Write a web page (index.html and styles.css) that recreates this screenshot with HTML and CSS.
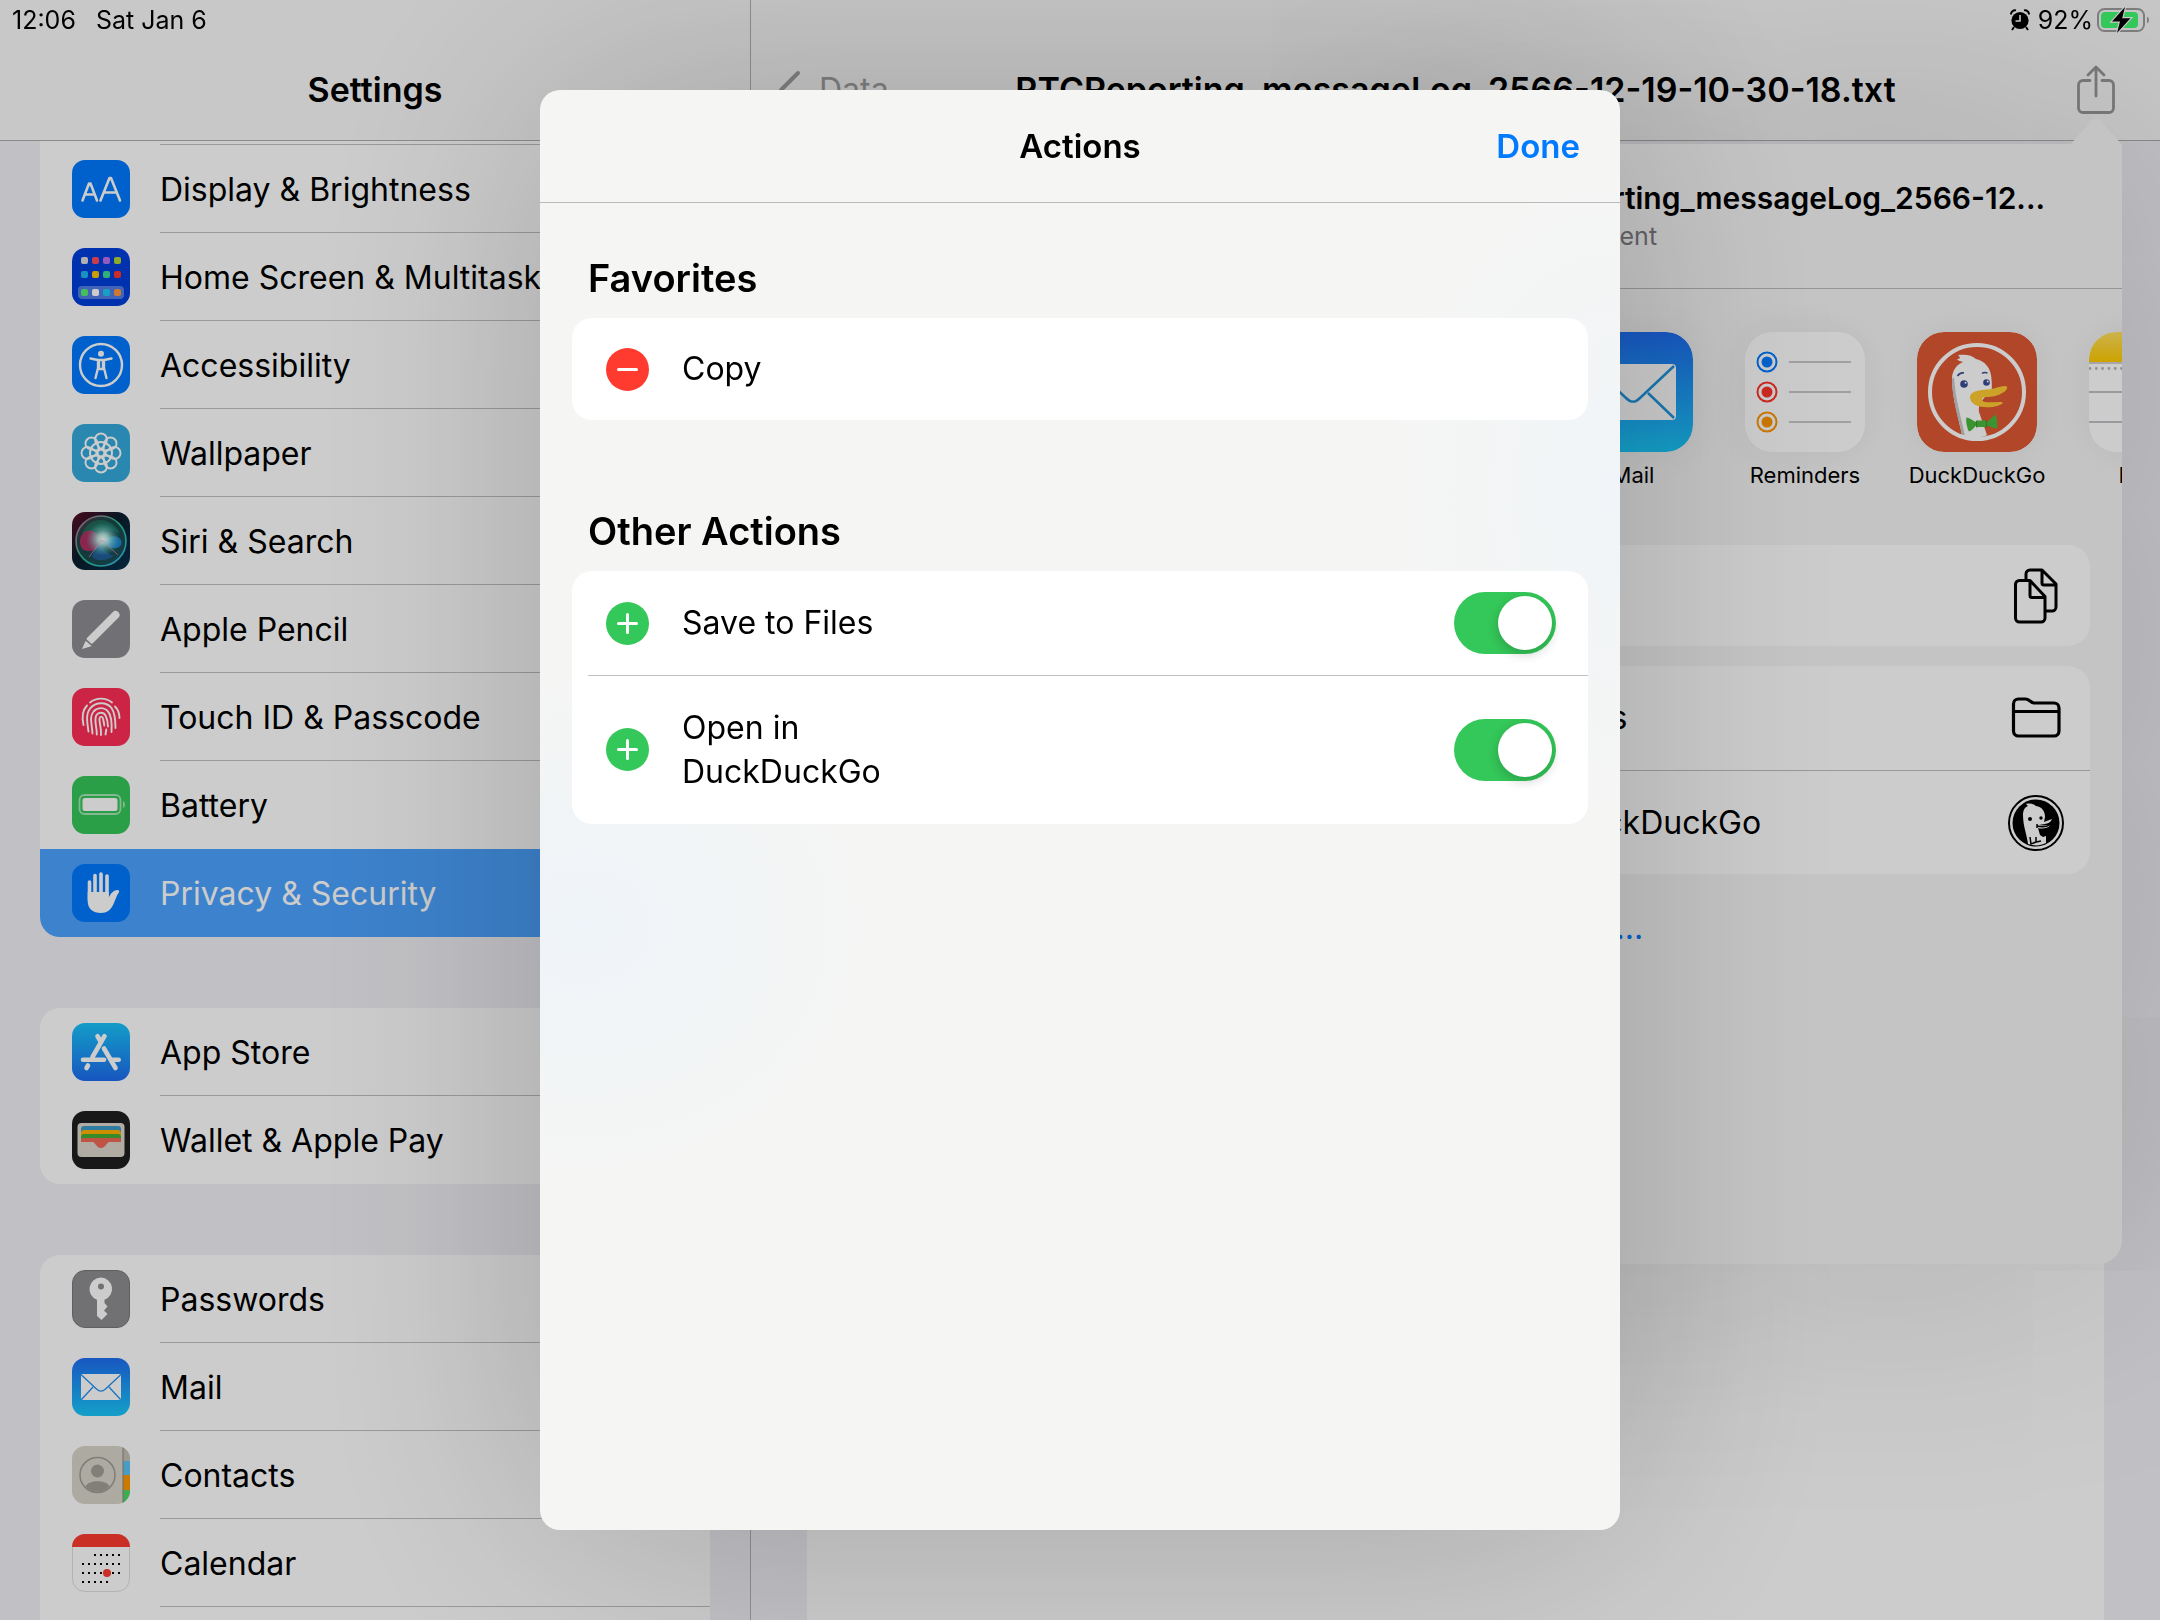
FILE: index.html
```html
<!DOCTYPE html>
<html lang="en">
<head>
<meta charset="utf-8">
<meta name="viewport" content="width=device-width, initial-scale=1">
<title>Settings</title>
<link rel="stylesheet" href="styles.css">
</head>
<body>
<div class="status">
  <span>12:06</span>
  <span class="status-date">Sat Jan 6</span>
  <svg class="status-alarm" viewBox="0 0 20 22" width="20" height="22" aria-hidden="true">
    <circle cx="10" cy="11.5" r="8.6"/><path d="M1 5.5A4 4 0 0 1 6 1.4M19 5.5A4 4 0 0 0 14 1.4M4 18l-2 3M16 18l2 3" fill="none" stroke="#000" stroke-width="2"/>
    <path d="M10 6v6H5.5" fill="none" stroke="#c8c8c8" stroke-width="1.6"/>
  </svg>
  <span>92%</span>
  <svg class="status-battery" viewBox="0 0 54 28" width="54" height="28" aria-hidden="true">
    <rect x="1" y="3" width="46" height="22" rx="6.500" fill="none" stroke="#7d7d7d" stroke-width="2"/>
    <rect x="4" y="6" width="37" height="16" rx="4" fill="#34c759"/>
    <path d="M50 10.500a4 4 0 0 1 0 7z" fill="#7d7d7d"/>
    <path d="M28 1L15 15.500h8L20 27 33.500 12.300h-8.300z" fill="#000" stroke="#c8c8c8" stroke-width="2.400" paint-order="stroke"/>
  </svg>
</div>

<div class="app">
  <aside class="sidebar">
    <header class="bar"><h1 class="bar-title">Settings</h1></header>
    <nav class="menu" aria-label="Settings">
      <ul class="group group-scrolled">
        <li><a class="row" href="#display">
          <svg class="icon" viewBox="0 0 58 58" aria-hidden="true"><rect width="58" height="58" rx="13" fill="#007aff"/><path d="M10.500 40.500L17 23.500h1.500L25 40.500M13 34.500h9.500M28.500 40.500L37.500 18h1.500L48 40.500M31.800 32.500h13" fill="none" stroke="#fff" stroke-width="2.600" stroke-linecap="round" stroke-linejoin="round"/></svg>
          <span class="label">Display &amp; Brightness</span></a></li>
        <li><a class="row" href="#home">
          <svg class="icon" viewBox="0 0 58 58" aria-hidden="true"><rect width="58" height="58" rx="13" fill="#003fdc"/><rect x="6" y="38" width="46" height="13" rx="4" fill="#fff" opacity=".32"/>
            <g><rect x="9" y="9" width="7" height="7" rx="2" fill="#ddd"/><rect x="20" y="9" width="7" height="7" rx="2" fill="#ff4b60"/><rect x="31" y="9" width="7" height="7" rx="2" fill="#bb70f0"/><rect x="42" y="9" width="7" height="7" rx="2" fill="#b2d430"/>
            <rect x="9" y="23" width="7" height="7" rx="2" fill="#1fb8f0"/><rect x="20" y="23" width="7" height="7" rx="2" fill="#ffc400"/><rect x="31" y="23" width="7" height="7" rx="2" fill="#3ddc97"/><rect x="42" y="23" width="7" height="7" rx="2" fill="#ff3830"/>
            <rect x="9" y="41" width="7" height="7" rx="2" fill="#55ef70"/><rect x="20" y="41" width="7" height="7" rx="2" fill="#fff"/><rect x="31" y="41" width="7" height="7" rx="2" fill="#1cc8f5"/><rect x="42" y="41" width="7" height="7" rx="2" fill="#ff9840"/></g></svg>
          <span class="label">Home Screen &amp; Multitasking</span></a></li>
        <li><a class="row" href="#accessibility">
          <svg class="icon" viewBox="0 0 58 58" aria-hidden="true"><rect width="58" height="58" rx="13" fill="#007aff"/><circle cx="29" cy="29" r="21" fill="none" stroke="#fff" stroke-width="2.400"/><circle cx="29" cy="17.800" r="3" fill="#fff"/><path d="M18.500 22.500L26 24v8l-2.500 10M39.500 22.500L32 24v8l2.500 10M26 24h6M27 24v9h4v-9" fill="none" stroke="#fff" stroke-width="2.400" stroke-linecap="round" stroke-linejoin="round"/></svg>
          <span class="label">Accessibility</span></a></li>
        <li><a class="row" href="#wallpaper">
          <svg class="icon" viewBox="0 0 58 58" aria-hidden="true"><rect width="58" height="58" rx="13" fill="#35abdc"/>
            <g fill="none" stroke="#fff" stroke-width="1.900"><circle cx="29" cy="29" r="3.500"/><g id="petals"><path d="M29 25.500C24 20 23 17 23 15.500a6 6 0 0 1 12 0C35 17 34 20 29 25.500z"/><path d="M29 25.500C24 20 23 17 23 15.500a6 6 0 0 1 12 0C35 17 34 20 29 25.500z" transform="rotate(45 29 29)"/><path d="M29 25.500C24 20 23 17 23 15.500a6 6 0 0 1 12 0C35 17 34 20 29 25.500z" transform="rotate(90 29 29)"/><path d="M29 25.500C24 20 23 17 23 15.500a6 6 0 0 1 12 0C35 17 34 20 29 25.500z" transform="rotate(135 29 29)"/></g><use href="#petals" transform="rotate(180 29 29)"/><circle cx="29" cy="29" r="11"/></g></svg>
          <span class="label">Wallpaper</span></a></li>
        <li><a class="row" href="#siri">
          <svg class="icon" viewBox="0 0 58 58" aria-hidden="true">
            <defs><linearGradient id="siriBg" x1="0" y1="0" x2="1" y2="1"><stop offset="0" stop-color="#5a0a24"/><stop offset=".45" stop-color="#0a1e2c"/><stop offset="1" stop-color="#08304e"/></linearGradient>
            <radialGradient id="siriGlow"><stop offset="0" stop-color="#fff"/><stop offset=".3" stop-color="#c8fff4" stop-opacity=".85"/><stop offset="1" stop-color="#40c8c8" stop-opacity="0"/></radialGradient>
            <linearGradient id="siriRing" x1="0" y1="0" x2="1" y2="1"><stop offset="0" stop-color="#d0608a"/><stop offset=".5" stop-color="#2ac090"/><stop offset="1" stop-color="#38b4f0"/></linearGradient></defs>
            <rect width="58" height="58" rx="13" fill="url(#siriBg)"/><circle cx="29" cy="29" r="25" fill="#2c7a72" opacity=".45"/><circle cx="29" cy="29" r="25" fill="none" stroke="url(#siriRing)" stroke-width="1.600"/>
            <path d="M29 8a21 21 0 0 1 19 14c-8-6-24-6-38 0C13 14 20 8 29 8z" fill="#18a070" opacity=".4"/>
            <path d="M8 30c0-9 7-13 13-11 5 2 7 7 11 10-5 7-11 11-16 10-5 0-8-4-8-9z" fill="#e8286a" opacity=".7"/><path d="M30 28c7-4 15-6 19 0 2 6-3 9-8 8-5 0-8-4-11-8z" fill="#2090e8" opacity=".8"/><path d="M28 30c3 8 8 12 14 14-10 6-20 5-22 0 2-5 5-8 8-14z" fill="#2870d0" opacity=".55"/>
            <circle cx="31" cy="27" r="17" fill="url(#siriGlow)"/><path d="M17 45l13-17 16 15" fill="none" stroke="#e8a0d0" stroke-width="1" opacity=".6"/></svg>
          <span class="label">Siri &amp; Search</span></a></li>
        <li><a class="row" href="#pencil">
          <svg class="icon" viewBox="0 0 58 58" aria-hidden="true"><rect width="58" height="58" rx="13" fill="#8e8e93"/><path d="M18.500 40L43.500 15" stroke="#fff" stroke-width="8" stroke-linecap="round"/><path d="M13.500 41l6.500 5-10 3z" fill="#fff"/><path d="M10.500 39.500L20 48" stroke="#8e8e93" stroke-width="1.500" transform="translate(2 -1)"/></svg>
          <span class="label">Apple Pencil</span></a></li>
        <li><a class="row" href="#touchid">
          <svg class="icon" viewBox="0 0 58 58" aria-hidden="true"><rect width="58" height="58" rx="13" fill="#ff2d55"/><g fill="none" stroke="#fff" stroke-width="1.900" stroke-linecap="round"><path d="M18 14.500c6.500-5.200 15.500-5.200 22 0"/><path d="M11.500 37c-1.800-8-.8-15 3.500-19.500"/><path d="M43 18.500c3.500 3.500 4.500 7.500 4.500 11.500"/><path d="M16.500 43.500C14.800 33 13.800 25.500 18.500 20c6-6.500 16-6 21 0 3.500 5 4 13 4 20"/><path d="M20.500 45.500C20 36 17 29 21.500 23.500c4-4.500 11-4.500 14.500 0 3.500 4 4 12 3.500 20.500"/><path d="M24.800 46.500c.2-8-3.300-14.500-.3-19.500 2-3 7-3 9 .5 2 4 2.500 7 2.500 11"/><path d="M29 47c.5-8-2-12-1.500-16.500.5-2.500 3-2.500 3.500 0 .5 2 1 4.500 1.300 7"/><path d="M33.500 46.500l.8-5"/></g></svg>
          <span class="label">Touch ID &amp; Passcode</span></a></li>
        <li><a class="row" href="#battery">
          <svg class="icon" viewBox="0 0 58 58" aria-hidden="true"><rect width="58" height="58" rx="13" fill="#35c759"/><rect x="7.500" y="19" width="41" height="19" rx="5" fill="none" stroke="#fff" stroke-opacity=".55" stroke-width="1.800"/><rect x="10.500" y="22" width="35" height="13" rx="2.500" fill="#fff"/><path d="M51 25a4 4 0 0 1 0 7z" fill="#fff" fill-opacity=".55"/></svg>
          <span class="label">Battery</span></a></li>
        <li><a class="row row-selected" href="#privacy" aria-current="page">
          <svg class="icon" viewBox="0 0 58 58" aria-hidden="true"><rect width="58" height="58" rx="13" fill="#007aff"/><g stroke="#fff" stroke-width="3.600" stroke-linecap="round" fill="none"><path d="M17.500 18v18M23 11.500V30M29 10v20M35 12v20"/></g><path d="M15.700 28h21.100v5.500c2-3.500 3.500-6.500 8-7.500 2-.3 3 1 2 2.500-2.500 3.500-3.500 8-6 13C38.500 46 35 49 29 49c-8 0-13.300-4-13.300-12z" fill="#fff"/></svg>
          <span class="label">Privacy &amp; Security</span></a></li>
      </ul>
      <ul class="group">
        <li><a class="row" href="#appstore">
          <svg class="icon" viewBox="0 0 58 58" aria-hidden="true"><defs><linearGradient id="store" x2="0" y2="1"><stop offset="0" stop-color="#1ac4fa"/><stop offset="1" stop-color="#1d6cf0"/></linearGradient></defs><rect width="58" height="58" rx="13" fill="url(#store)"/><g stroke="#fff" stroke-width="4.600" stroke-linecap="round" fill="none"><path d="M32.500 13.200L20.500 34M25.500 13.200l3 5M32 25.500l11.500 19.500M11 36.800h21M40.500 36.800h6.200M16 42.500l-1.500 2.500"/></g></svg>
          <span class="label">App Store</span></a></li>
        <li><a class="row" href="#wallet">
          <svg class="icon" viewBox="0 0 58 58" aria-hidden="true"><rect width="58" height="58" rx="13" fill="#1e1e1e"/><rect x="5.500" y="12" width="47" height="34" rx="4" fill="#dcd8cc"/><rect x="9" y="15" width="40" height="12" rx="3" fill="#3c9bc9"/><rect x="9" y="19" width="40" height="12" rx="3" fill="#ffb300"/><rect x="9" y="23" width="40" height="8" rx="3" fill="#45b035"/><path d="M9 29c0-2 1-2 3-2h34c2 0 3 0 3 2v2H37.500c-3 0-3.500 6-8.500 6s-5.500-6-8.500-6H9z" fill="#ef6a56"/></svg>
          <span class="label">Wallet &amp; Apple Pay</span></a></li>
      </ul>
      <ul class="group">
        <li><a class="row" href="#passwords">
          <svg class="icon" viewBox="0 0 58 58" aria-hidden="true"><rect x=".5" y=".5" width="57" height="57" rx="12.500" fill="#8e8e92" stroke="#79797c"/><path fill-rule="evenodd" d="M29 7.500a11.500 11.500 0 0 0-4 22.300V46l4.500 4 6-6-3.500-3.500 3.500-4-3-3.500v-3.200A11.500 11.500 0 0 0 29 7.500zm0 6a3 3 0 1 1 0 6 3 3 0 0 1 0-6z" fill="#fff"/></svg>
          <span class="label">Passwords</span></a></li>
        <li><a class="row" href="#mail">
          <svg class="icon" viewBox="0 0 58 58" aria-hidden="true"><defs><linearGradient id="mail" x2="0" y2="1"><stop offset="0" stop-color="#1e6df2"/><stop offset="1" stop-color="#1ac8fa"/></linearGradient></defs><rect width="58" height="58" rx="13" fill="url(#mail)"/><rect x="9" y="16" width="40" height="26" rx="2" fill="#fff"/><path d="M9.500 17l15 14c3 2.800 6 2.800 9 0l15-14M9.500 41.500L21 29M48.500 41.500L37 29" fill="none" stroke="#2090f0" stroke-width="1.300"/></svg>
          <span class="label">Mail</span></a></li>
        <li><a class="row" href="#contacts">
          <svg class="icon" viewBox="0 0 58 58" aria-hidden="true"><defs><clipPath id="round"><rect width="58" height="58" rx="13"/></clipPath></defs><g clip-path="url(#round)"><rect width="58" height="58" fill="#d9d5ca"/><rect x="51" width="7" height="15" fill="#c4c0b6"/><rect x="51" y="15" width="7" height="14" fill="#5cc3f5"/><rect x="51" y="29" width="7" height="15" fill="#ff9800"/><rect x="51" y="44" width="7" height="14" fill="#4cd964"/><path d="M51 0v58" stroke="#8a877f" stroke-width="1"/></g><circle cx="25.500" cy="29" r="17.500" fill="none" stroke="#a09d95" stroke-width="1.500"/><circle cx="25.500" cy="25" r="6.500" fill="#a39f96"/><path d="M13.500 40.500c3-7 21-7 24 0-6 7-18 7-24 0z" fill="#a39f96"/></svg>
          <span class="label">Contacts</span></a></li>
        <li><a class="row" href="#calendar">
          <svg class="icon" viewBox="0 0 58 58" aria-hidden="true"><rect x=".5" y=".5" width="57" height="57" rx="12.500" fill="#fff" stroke="#e0e0e0"/><path d="M0 13A13 13 0 0 1 13 0h32a13 13 0 0 1 13 13z" fill="#fd3b30"/><g fill="none" stroke="#000" stroke-width="2" stroke-dasharray="2 4"><path d="M22 21h27M10 30h39M10 39h39M10 48h27"/></g><circle cx="35" cy="39" r="4" fill="#fd3b30"/></svg>
          <span class="label">Calendar</span></a></li>
        <li><a class="row" href="#notes"><span class="icon"></span><span class="label"></span></a></li>
      </ul>
    </nav>
  </aside>

  <main class="detail">
    <header class="bar">
      <a class="back" href="#data"><svg viewBox="0 0 24 40" width="24" height="40" aria-hidden="true"><path d="M21 3L4 20l17 17" fill="none" stroke="currentColor" stroke-width="4" stroke-linecap="round" stroke-linejoin="round"/></svg>Data</a>
      <h2 class="bar-title">RTCReporting_messageLog_2566-12-19-10-30-18.txt</h2>
      <button class="share" type="button" aria-label="Share"><svg viewBox="0 0 40 50" width="40" height="50" aria-hidden="true"><path d="M14 15.500H7a4.500 4.500 0 0 0-4.500 4.500v23A4.500 4.500 0 0 0 7 47.500h26a4.500 4.500 0 0 0 4.500-4.500V20a4.500 4.500 0 0 0-4.500-4.500h-7M20 31V3M12 10l8-8 8 8" fill="none" stroke="currentColor" stroke-width="2.800" stroke-linecap="round" stroke-linejoin="round"/></svg></button>
    </header>
    <article class="document"></article>
  </main>

  <section class="popover" aria-label="Share sheet">
    <header class="file">
      <strong class="file-name">RTCReporting_messageLog_2566-12...</strong>
      <span class="file-kind">Text Document</span>
    </header>
    <ul class="targets">
      <li class="target"><svg class="target-icon" viewBox="0 0 120 120" aria-hidden="true"><rect width="120" height="120" rx="27" fill="url(#mail)"/><rect x="17" y="32" width="86" height="56" rx="4" fill="#fff"/><path d="M19 34l34 32c5 5 9 5 14 0l34-32M19 86l27-25M101 86L75 61" fill="none" stroke="#1f96e0" stroke-width="2.500"/></svg>Mail</li>
      <li class="target"><svg class="target-icon" viewBox="0 0 120 120" aria-hidden="true"><rect width="120" height="120" rx="27" fill="#fff"/><g stroke="#c8c8cc" stroke-width="2"><path d="M44 30h62M44 60h62M44 90h62"/></g><g fill="none" stroke-width="2"><circle cx="22" cy="30" r="9.500" stroke="#007aff"/><circle cx="22" cy="60" r="9.500" stroke="#ff3428"/><circle cx="22" cy="90" r="9.500" stroke="#ff9500"/></g><circle cx="22" cy="30" r="5.500" fill="#007aff"/><circle cx="22" cy="60" r="5.500" fill="#ff3428"/><circle cx="22" cy="90" r="5.500" fill="#ff9500"/></svg>Reminders</li>
      <li class="target"><svg class="target-icon" viewBox="0 0 120 120" aria-hidden="true"><rect width="120" height="120" rx="27" fill="#de5833"/><path d="M45 103C42 88 35 66 35 47c0-8 4-14 11-17-2-1-5-1-6-3 3 0 4-1 1-4 8-1 14 0 18 4 9 2 15 9 15.500 20 .5 9 1.500 12-4.500 16-5 5-9 9-8 17l8 23c-8 4-17 3-25 0z" fill="#fff"/><path d="M35 47c0 20 7 40 10 56l3 1C44 85 38 65 37 45z" fill="#c8c8c8"/><circle cx="60" cy="60" r="47" fill="none" stroke="#fff" stroke-width="4"/><circle cx="47" cy="52" r="3.800" fill="#3a4f97"/><circle cx="69.500" cy="50.500" r="3.300" fill="#3a4f97"/><circle cx="48.500" cy="50.800" r="1" fill="#fff"/><circle cx="70.700" cy="49.500" r="1" fill="#fff"/><path d="M40.500 44c1.500-2.500 4-3.500 6.500-3M65 41.500c1.500-1.200 3.500-1.200 5.500-.5" fill="none" stroke="#3a4f97" stroke-width="1.600"/><path d="M53 65c0-5 8-7 17-7.500 8-.5 13-3.500 18-3.500 4 0 2 4-1 6-6 4-11 5-19 5-4 .5-4 4.500 0 5 6 1 12-.5 17 0 2 1-1 3-5 4-9 2.500-27 2-27-9z" fill="#ffcc33"/><path d="M49.500 85.500c3 0 6 3 9.500 4.500l1-1.500h9l1.500 1c3-2 5-5 8-7 1.500 3 2 11 1.500 14-3 0-7-2-10-3l-1.500 1.500h-9L59 93.500c-2 2-4 5-7 6-2-3-3.500-11-2.500-14z" fill="#4cba3c"/><path d="M60 88.500c-1 2-1 5 0 7M69 88.500c1 2 1 5 0 7" fill="none" stroke="#2f8f25"/></svg>DuckDuckGo</li>
      <li class="target"><svg class="target-icon" viewBox="0 0 120 120" aria-hidden="true"><defs><clipPath id="noteClip"><rect width="120" height="120" rx="27"/></clipPath><linearGradient id="note" x2="0" y2="1"><stop offset="0" stop-color="#ffe060"/><stop offset="1" stop-color="#ffcc00"/></linearGradient></defs><g clip-path="url(#noteClip)"><rect width="120" height="120" fill="#fff"/><rect width="120" height="30" fill="url(#note)"/><path d="M0 31h120" stroke="#c0c0c4" stroke-width="1.500"/><path d="M1 36.500h119" stroke="#b4b4b8" stroke-width="2.800" stroke-linecap="round" stroke-dasharray="0 6.300"/><path d="M0 60h120M0 90h120" stroke="#c0c0c6" stroke-width="2"/></g></svg>Notes</li>
    </ul>
    <div class="sheet-group">
      <button class="sheet-row" type="button">Copy<svg viewBox="0 0 60 60" width="60" height="60" aria-hidden="true"><g fill="none" stroke="#000" stroke-width="3" stroke-linejoin="round"><path d="M20 13.500V8a4 4 0 0 1 4-4h12l14 14v23a4 4 0 0 1-4 4h-6M36 4v13a2 2 0 0 0 2 2h12"/><path d="M9.500 18.500a4 4 0 0 1 4-4H24l15 16v21.500a4 4 0 0 1-4 4H13.500a4 4 0 0 1-4-4zM24 14.500v15a2 2 0 0 0 2 2h13"/></g></svg></button>
    </div>
    <div class="sheet-group">
      <button class="sheet-row" type="button">Save to Files<svg viewBox="0 0 60 60" width="60" height="60" aria-hidden="true"><path d="M7.500 16a5 5 0 0 1 5-5h7c4 0 5 4 9 4H48a5 5 0 0 1 5 5v23a5 5 0 0 1-5 5H12.500a5 5 0 0 1-5-5zM7.500 23.500H53" fill="none" stroke="#000" stroke-width="3.200"/></svg></button>
      <button class="sheet-row" type="button">Open in DuckDuckGo<svg viewBox="0 0 60 60" width="60" height="60" aria-hidden="true"><circle cx="30" cy="30" r="27" fill="none" stroke="#000" stroke-width="2"/><circle cx="30" cy="30" r="23.500" fill="#000"/><path d="M22 51c-1-9-5-18-5-29 0-5 2-8 5-9l-2-2c4-1 8 0 10 2 6 1 9 5 9 11l-1 5 8-3c-1 4-6 5-13 6 4 1 8 0 11 0-2 4-9 4-12 3l2 7 3 2 3-1v7c-6 3-12 3-18 1z" fill="#fff"/><circle cx="24" cy="26" r="2" fill="#000"/><circle cx="35" cy="25" r="1.700" fill="#000"/><path d="M31 33c4 1 10 1 14-2M31 31v4M24 44l1 7 5-2M30 44v5l5-1" fill="none" stroke="#000" stroke-width="1.500"/></svg></button>
    </div>
    <a class="edit" href="#edit">Edit Actions...</a>
  </section>
</div>

<div class="scrim">
  <section class="modal" role="dialog" aria-modal="true" aria-labelledby="modal-title">
    <header class="modal-bar">
      <h2 class="modal-title" id="modal-title">Actions</h2>
      <button class="done" type="button">Done</button>
    </header>
    <div class="modal-body">
      <h3 class="heading">Favorites</h3>
      <ul class="list">
        <li class="action">
          <button class="dot dot-remove" type="button" aria-label="Remove Copy"></button>
          <span class="action-name">Copy</span>
        </li>
      </ul>
      <h3 class="heading">Other Actions</h3>
      <ul class="list">
        <li class="action">
          <button class="dot dot-add" type="button" aria-label="Add Save to Files"></button>
          <label class="action-name" for="save">Save to Files</label>
          <input class="switch" id="save" type="checkbox" role="switch" checked>
        </li>
        <li class="action action-tall">
          <button class="dot dot-add" type="button" aria-label="Add Open in DuckDuckGo"></button>
          <label class="action-name" for="open">Open in<br>DuckDuckGo</label>
          <input class="switch" id="open" type="checkbox" role="switch" checked>
        </li>
      </ul>
    </div>
  </section>
</div>
</body>
</html>
```
FILE: styles.css
```css
:root {
  --blue: #007aff;
  --green: #34c759;
  --red: #ff3b30;
  --page: #f2f2f7;
  --line: rgba(60, 60, 67, 0.32);
}

*, *::before, *::after { box-sizing: border-box; }

body {
  margin: 0;
  background: var(--page);
  color: #000;
  font: 400 32px/44px Inter, "Liberation Sans", sans-serif;
}

ul { list-style: none; margin: 0; padding: 0; }
h1, h2, h3 { margin: 0; font-weight: 600; }
a { color: inherit; text-decoration: none; }
button { margin: 0; padding: 0; border: 0; background: none; color: inherit; font: inherit; }
svg { display: block; flex: none; }

/* Status bar, drawn above the dimmed content */
.status {
  position: fixed;
  inset: 0 0 auto 0;
  z-index: 3;
  display: flex;
  align-items: center;
  height: 40px;
  padding: 0 9px 0 12px;
  font-size: 25px;
  line-height: 40px;
}
.status-date { margin: 0 auto 0 20px; }
.status-alarm { margin-right: 8px; }
.status-battery { margin-left: 4px; }

/* Split view */
.app {
  position: relative;
  display: grid;
  grid-template-columns: 751px 1fr;
  height: 100vh;
  overflow: hidden;
}
.sidebar { border-right: 1px solid rgba(0, 0, 0, 0.26); overflow: hidden; }
.detail { display: flex; flex-direction: column; min-width: 0; }

.bar {
  position: relative;
  display: flex;
  align-items: center;
  justify-content: center;
  height: 141px;
  padding-top: 40px;
  border-bottom: 1px solid rgba(0, 0, 0, 0.3);
  background: #fafafa;
}
.bar-title { font-size: 34px; white-space: nowrap; }

.back {
  position: absolute;
  left: 26px;
  display: flex;
  align-items: center;
  gap: 18px;
  color: #a0a0a0;
}
.share { position: absolute; right: 44px; color: #999; }

/* Sidebar menu */
.menu { padding: 0 40px; }
.group {
  margin-bottom: 71px;
  border-radius: 20px;
  background: #fff;
  overflow: hidden;
}
.group-scrolled { border-radius: 0 0 20px 20px; }
.group-scrolled::before {
  content: "";
  display: block;
  height: 4px;
  margin-left: 120px;
  border-bottom: 1px solid var(--line);
}
.row {
  display: flex;
  align-items: center;
  gap: 30px;
  height: 88px;
  padding-left: 32px;
}
.icon { flex: none; width: 58px; height: 58px; }
.label {
  flex: 1;
  align-self: stretch;
  display: flex;
  align-items: center;
  padding-top: 2px;
  border-bottom: 1px solid var(--line);
  white-space: nowrap;
}
li:last-child .label, li:has(+ li .row-selected) .label { border-bottom: 0; }
.row-selected { background: #4ca3ff; color: #fff; }

.document { flex: 1; margin: 40px 56px 0; background: #fff; }

/* Share popover */
.popover {
  position: absolute;
  top: 144px;
  right: 38px;
  width: 750px;
  height: 1120px;
  border-radius: 24px 0 24px 24px;
  background: #f6f6f6;
  box-shadow: 0 0 260px rgba(0, 0, 0, 0.2);
}
.popover::before {
  content: "";
  position: absolute;
  top: -26px;
  right: 0;
  width: 52px;
  height: 27px;
  background: #f6f6f6;
  clip-path: polygon(0 100%, 42% 8%, 50% 0, 58% 8%, 100% 100%);
}
.file {
  display: flex;
  flex-direction: column;
  height: 145px;
  padding: 34px 40px 0 106px;
  border-bottom: 1px solid var(--line);
}
.file-name { font-size: 30px; line-height: 40px; font-weight: 600; white-space: nowrap; }
.file-kind { color: #7c7c80; font-size: 25px; line-height: 36px; }
.targets {
  display: flex;
  height: 256px;
  padding: 43px 0 0 175px;
  overflow: hidden;
}
.target {
  flex: none;
  display: flex;
  flex-direction: column;
  align-items: center;
  gap: 7px;
  width: 172px;
  font-size: 22px;
  line-height: 32px;
}
.target-icon { width: 120px; height: 120px; border-radius: 27px; box-shadow: 0 0 40px rgba(0, 0, 0, 0.06); }
.sheet-group { margin: 0 32px 20px; border-radius: 22px; background: #fff; overflow: hidden; }
.sheet-row {
  display: flex;
  align-items: center;
  justify-content: space-between;
  width: 100%;
  height: 104px;
  padding: 0 24px 0 32px;
}
.sheet-row:only-child { height: 101px; }
.sheet-row + .sheet-row { border-top: 1px solid var(--line); }
.edit { display: block; padding: 12px 64px; color: var(--blue); }

/* Modal */
.scrim {
  position: fixed;
  inset: 0;
  z-index: 2;
  display: grid;
  place-items: center;
  background: rgba(0, 0, 0, 0.2);
}
.modal {
  width: 50%;
  min-width: 720px;
  height: calc(100% - 180px);
  border-radius: 20px;
  background:
    radial-gradient(300px 260px at 4% 58%, rgba(238, 243, 249, 0.9), transparent),
    radial-gradient(240px 340px at 100% 28%, rgba(240, 244, 249, 0.8), transparent),
    #f5f6f4;
  box-shadow: 0 0 250px rgba(0, 0, 0, 0.2);
  overflow: hidden;
}
.modal-bar {
  position: relative;
  display: flex;
  align-items: center;
  justify-content: center;
  height: 113px;
  border-bottom: 1px solid var(--line);
}
.modal-title { font-size: 33px; }
.done { position: absolute; right: 40px; color: var(--blue); font-size: 33px; font-weight: 600; }
.modal-body { padding: 0 32px; }
.heading { padding: 51px 16px 16px; font-size: 38px; line-height: 48px; }
.list { margin-bottom: 36px; border-radius: 20px; background: #fff; }
.action {
  position: relative;
  display: flex;
  align-items: center;
  gap: 33px;
  min-height: 102px;
  padding: 0 32px 0 34px;
}
.action:not(:only-child) { min-height: 104px; }
.action-tall.action-tall { min-height: 149px; }
.action + .action::before {
  content: "";
  position: absolute;
  inset: 0 0 auto 16px;
  border-top: 1px solid var(--line);
}
.action-name { flex: 1; }
.dot { position: relative; flex: none; width: 43px; height: 43px; border-radius: 50%; }
.dot-remove { background: var(--red); }
.dot-add { background: var(--green); }
.dot::before, .dot-add::after {
  content: "";
  position: absolute;
  inset: 20px 11px;
  border-radius: 2px;
  background: #fff;
}
.dot-add::after { inset: 11px 20px; }
.switch {
  appearance: none;
  flex: none;
  width: 102px;
  height: 62px;
  margin: 0;
  border-radius: 31px;
  background: #e9e9ea;
}
.switch::before {
  content: "";
  display: block;
  width: 54px;
  height: 54px;
  margin: 4px;
  border-radius: 50%;
  background: #fff;
  box-shadow: 0 4px 12px rgba(0, 0, 0, 0.2);
}
.switch:checked { background: var(--green); }
.switch:checked::before { margin-left: 44px; }
```
